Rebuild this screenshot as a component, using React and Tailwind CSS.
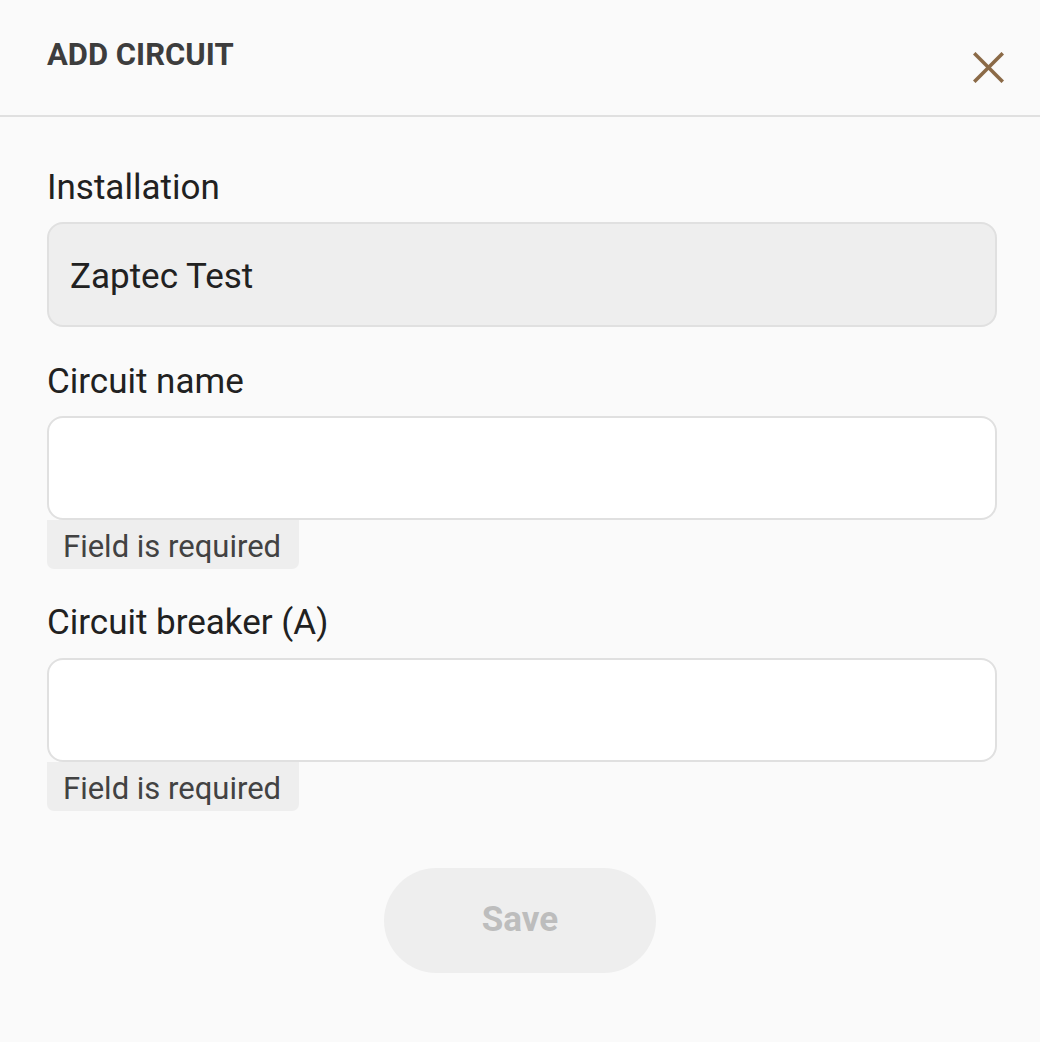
export default function App() {
  const font = { fontFamily: "Roboto, 'Noto Sans', sans-serif" };

  return (
    <div className="min-h-[1042px] w-full bg-[#fafafa]" style={font}>
      {/* Header */}
      <div className="flex h-[117px] items-start justify-between border-b-2 border-[#e0e0e0] pl-[47px] pr-[36px]">
        <h1 className="mt-[40px] text-[31px] font-bold leading-[30px] text-[#3d3d3d]">ADD CIRCUIT</h1>
        <button className="mt-[52px] flex h-[31px] w-[31px] items-center justify-center" aria-label="Close">
          <svg width="31" height="31" viewBox="0 0 31 31" fill="none" stroke="#8b6a47" strokeWidth="3.6" strokeLinecap="square">
            <line x1="2.5" y1="2.5" x2="28.5" y2="28.5" />
            <line x1="28.5" y1="2.5" x2="2.5" y2="28.5" />
          </svg>
        </button>
      </div>

      {/* Form */}
      <div className="flex flex-col pl-[47px] pr-[43px] pt-[51px]">
        <label className="mb-[14px] text-[35px] leading-[40px] text-[#212121]">Installation</label>
        <div className="flex h-[105px] items-center rounded-[16px] border-2 border-[#e0e0e0] bg-[#eeeeee] pl-[21px] pt-[5px] text-[35px] text-[#212121]">
          Zaptec Test
        </div>

        <label className="mb-[14px] mt-[35px] text-[35px] leading-[40px] text-[#212121]">Circuit name</label>
        <input className="h-[104px] rounded-[16px] border-2 border-[#e0e0e0] bg-white pl-[21px] text-[35px] outline-none" />
        <div className="w-[252px] self-start rounded-b-[7px] bg-[#eeeeee] pl-[16px] pt-[4px] text-[31px] leading-[45px] text-[#424242]">
          Field is required
        </div>

        <label className="mb-[15px] mt-[34px] text-[35px] leading-[40px] text-[#212121]">Circuit breaker (A)</label>
        <input className="h-[104px] rounded-[16px] border-2 border-[#e0e0e0] bg-white pl-[21px] text-[35px] outline-none" />
        <div className="w-[252px] self-start rounded-b-[7px] bg-[#eeeeee] pl-[16px] pt-[4px] text-[31px] leading-[45px] text-[#424242]">
          Field is required
        </div>

        <div className="mt-[57px] flex justify-center pr-[4px]">
          <button disabled className="h-[105px] w-[272px] rounded-full bg-[#eeeeee] text-[35px] font-bold text-[#bdbdbd]">
            Save
          </button>
        </div>
      </div>
    </div>
  );
}
